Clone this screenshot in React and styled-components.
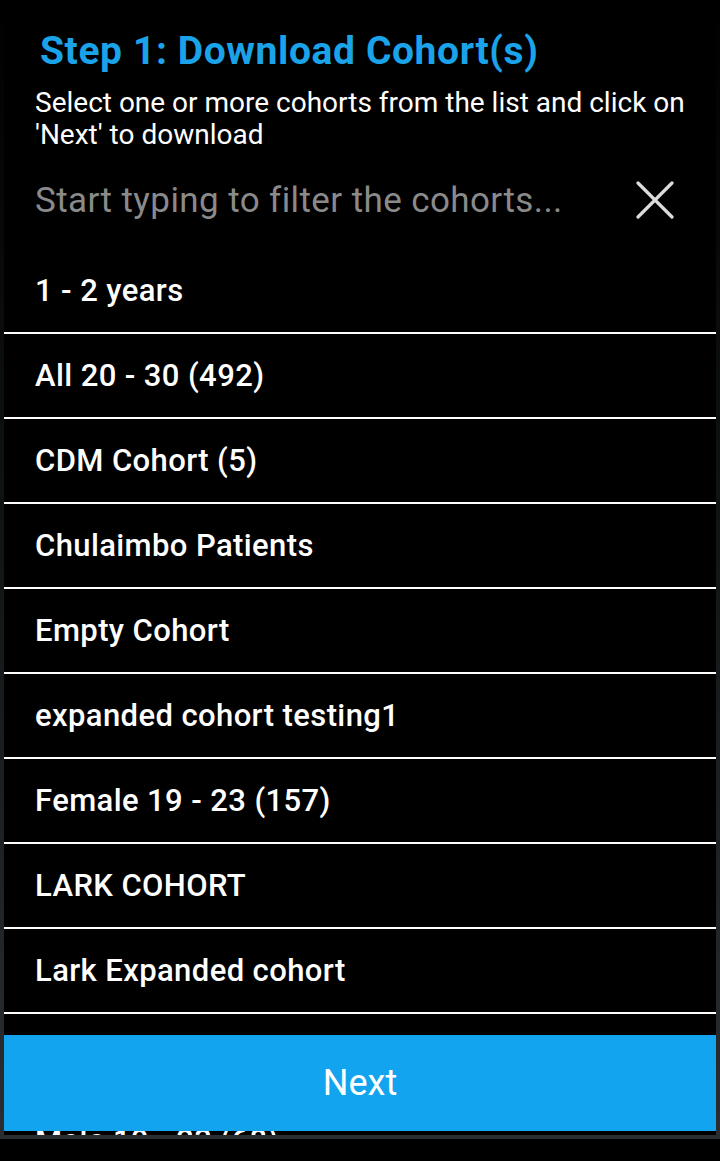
import styled, { createGlobalStyle } from "styled-components";

const cohorts = [
  "1 - 2 years",
  "All 20 - 30 (492)",
  "CDM Cohort (5)",
  "Chulaimbo Patients",
  "Empty Cohort",
  "expanded cohort testing1",
  "Female 19 - 23 (157)",
  "LARK COHORT",
  "Lark Expanded cohort",
  "Lark Patients",
  "Male 19 - 23 (68)",
  "Male Patients",
];

const App = () => {
  return (
    <>
      <GlobalStyle />
      <Frame>
        <Dialog>
          <Header>
            <Title>Step 1: Download Cohort(s)</Title>
            <Hint>
              Select one or more cohorts from the list and click on 'Next' to
              download
            </Hint>
          </Header>

          <SearchRow>
            <SearchInput placeholder="Start typing to filter the cohorts..." />
            <ClearButton type="button" aria-label="Clear filter">
              <svg width="38" height="38" viewBox="0 0 38 38">
                <path
                  d="M2 2 L36 36 M36 2 L2 36"
                  stroke="#dcdcdc"
                  strokeWidth="3.2"
                  strokeLinecap="round"
                />
              </svg>
            </ClearButton>
          </SearchRow>

          <List>
            {cohorts.map((name) => (
              <Item key={name}>{name}</Item>
            ))}
          </List>

          <NextButton type="button">Next</NextButton>
        </Dialog>
      </Frame>
    </>
  );
};

const GlobalStyle = createGlobalStyle`
  html, body {
    margin: 0;
    background: #000;
  }
  * {
    box-sizing: border-box;
  }
`;

const Frame = styled.div`
  width: 720px;
  height: 1139px;
  padding: 0 4px 4px;
  background: linear-gradient(to bottom, #000 0%, #0c0f10 35%, #2a2e31 100%);
  font-family: Roboto, "Liberation Sans", sans-serif;
`;

const Dialog = styled.div`
  position: relative;
  height: 1135px;
  overflow: hidden;
  background: #000;
`;

const Header = styled.div`
  padding: 30px 16px 0 31px;
`;

const Title = styled.h1`
  margin: 0 0 0 5px;
  font-size: 39px;
  line-height: 42px;
  font-weight: 700;
  letter-spacing: 0.6px;
  color: #1ba3e9;
`;

const Hint = styled.p`
  margin: 15px 0 0;
  font-size: 28px;
  line-height: 32px;
  color: #fff;
`;

const SearchRow = styled.div`
  height: 98px;
  display: flex;
  align-items: center;
  padding: 0 42px 0 31px;
`;

const SearchInput = styled.input`
  flex: 1;
  min-width: 0;
  border: 0;
  outline: none;
  background: transparent;
  font-family: inherit;
  font-size: 35px;
  letter-spacing: 0.4px;
  color: #fff;
  padding: 0;

  &::placeholder {
    color: #8a8a8a;
  }
`;

const ClearButton = styled.button`
  display: flex;
  border: 0;
  padding: 0;
  background: none;
`;

const List = styled.ul`
  list-style: none;
  margin: 0;
  padding: 0;
`;

const Item = styled.li`
  height: 85px;
  padding: 0 31px;
  display: flex;
  align-items: center;
  border-bottom: 2px solid #fff;
  font-size: 31px;
  font-weight: 500;
  letter-spacing: 0.4px;
  color: #fff;
`;

const NextButton = styled.button`
  position: absolute;
  left: 0;
  right: 0;
  bottom: 4px;
  height: 96px;
  border: 0;
  background: #12a4ee;
  color: #fff;
  font-family: inherit;
  font-size: 36px;
  font-weight: 400;
`;

export default App;
